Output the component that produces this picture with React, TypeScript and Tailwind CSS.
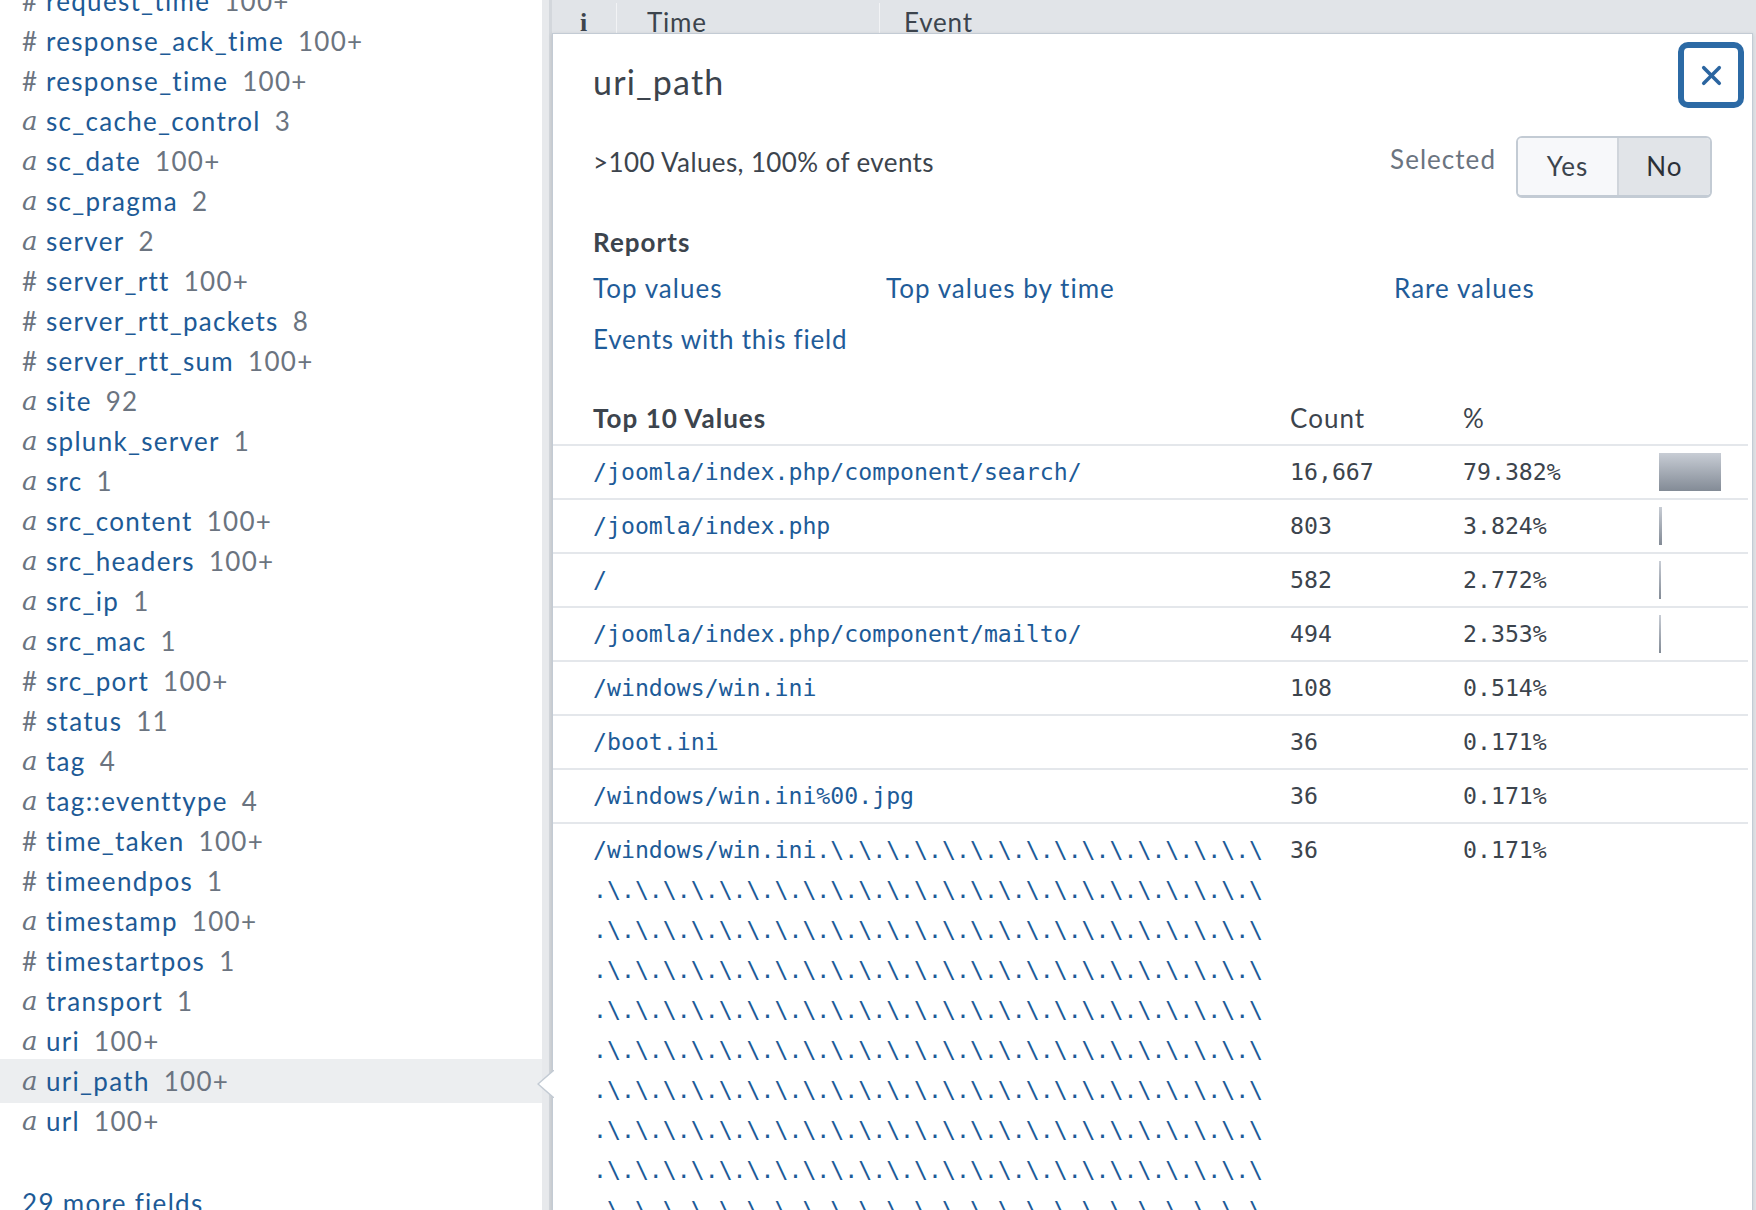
import { X } from "lucide-react";

type Field = { kind: "a" | "#"; name: string; count: string };

const fields: Field[] = [
  { kind: "#", name: "request_time", count: "100+" },
  { kind: "#", name: "response_ack_time", count: "100+" },
  { kind: "#", name: "response_time", count: "100+" },
  { kind: "a", name: "sc_cache_control", count: "3" },
  { kind: "a", name: "sc_date", count: "100+" },
  { kind: "a", name: "sc_pragma", count: "2" },
  { kind: "a", name: "server", count: "2" },
  { kind: "#", name: "server_rtt", count: "100+" },
  { kind: "#", name: "server_rtt_packets", count: "8" },
  { kind: "#", name: "server_rtt_sum", count: "100+" },
  { kind: "a", name: "site", count: "92" },
  { kind: "a", name: "splunk_server", count: "1" },
  { kind: "a", name: "src", count: "1" },
  { kind: "a", name: "src_content", count: "100+" },
  { kind: "a", name: "src_headers", count: "100+" },
  { kind: "a", name: "src_ip", count: "1" },
  { kind: "a", name: "src_mac", count: "1" },
  { kind: "#", name: "src_port", count: "100+" },
  { kind: "#", name: "status", count: "11" },
  { kind: "a", name: "tag", count: "4" },
  { kind: "a", name: "tag::eventtype", count: "4" },
  { kind: "#", name: "time_taken", count: "100+" },
  { kind: "#", name: "timeendpos", count: "1" },
  { kind: "a", name: "timestamp", count: "100+" },
  { kind: "#", name: "timestartpos", count: "1" },
  { kind: "a", name: "transport", count: "1" },
  { kind: "a", name: "uri", count: "100+" },
  { kind: "a", name: "uri_path", count: "100+" },
  { kind: "a", name: "url", count: "100+" },
];

const dots = ".\\".repeat(24);

const topValues = [
  { value: ["/joomla/index.php/component/search/"], count: "16,667", pct: 79.382 },
  { value: ["/joomla/index.php"], count: "803", pct: 3.824 },
  { value: ["/"], count: "582", pct: 2.772 },
  { value: ["/joomla/index.php/component/mailto/"], count: "494", pct: 2.353 },
  { value: ["/windows/win.ini"], count: "108", pct: 0.514 },
  { value: ["/boot.ini"], count: "36", pct: 0.171 },
  { value: ["/windows/win.ini%00.jpg"], count: "36", pct: 0.171 },
  {
    value: ["/windows/win.ini" + ".\\".repeat(16), ...Array(10).fill(dots)],
    count: "36",
    pct: 0.171,
  },
];

const sans = "[font-family:Lato,sans-serif]";

function FieldRow({ field, selected }: { field: Field; selected: boolean }) {
  return (
    <div
      className={
        selected
          ? "flex items-center h-[44px] -my-[2px] bg-[#eceef0] pl-[22px]"
          : "flex items-center h-[40px] pl-[22px]"
      }
    >
      {field.kind === "a" ? (
        <span className="w-[24px] text-[#6b7480] italic text-[26px] [font-family:'DejaVu_Serif',serif]">
          a
        </span>
      ) : (
        <span className="w-[24px] text-[#6b7480]">#</span>
      )}
      <span className="text-[#1d5a96]">{field.name}</span>
      <span className="ml-[14px] text-[#6b7480]">{field.count}</span>
    </div>
  );
}

function Sidebar() {
  return (
    <aside className="w-[542px] shrink-0 bg-white text-[26px] tracking-[0.05em]">
      <div className="-mt-[19px] flex flex-col">
        {fields.map((f) => (
          <FieldRow key={f.name} field={f} selected={f.name === "uri_path"} />
        ))}
      </div>
      <div className="pl-[22px] mt-[42px] h-[40px] flex items-center text-[#1d5a96]">
        29 more fields
      </div>
    </aside>
  );
}

function Popover() {
  return (
    <div className="relative w-[1201px] h-[1300px] bg-white border border-[#c3cbd4] shadow-[0_1px_4px_rgba(0,0,0,0.12)] text-[#3c444d]">
      {/* arrow pointing at the selected field */}
      <svg
        className="absolute -left-[16px] top-[1036px]"
        width="17"
        height="28"
        viewBox="0 0 17 28"
      >
        <polygon points="17,0 1,14 17,28" fill="#ffffff" />
        <polyline points="17,0 1,14 17,28" fill="none" stroke="#c3cbd4" strokeWidth="1.5" />
      </svg>

      <button className="absolute top-[8px] right-[8px] w-[66px] h-[66px] rounded-[10px] border-[6px] border-[#2c6aa5] bg-white flex items-center justify-center">
        <X size={31} strokeWidth={2.8} className="text-[#2b65a0]" />
      </button>

      <div className="pl-[40px] pr-[40px] pt-[26px]">
        <h2 className="text-[34px] leading-[44px] tracking-[0.035em] text-[#3c444d]">uri_path</h2>

        <div className="mt-[32px] flex items-center justify-between text-[26px]">
          <span className="mb-[10px] tracking-[0.015em]">&gt;100 Values, 100% of events</span>
          <div className="flex items-center tracking-[0.04em]">
            <span className="mb-[16px] mr-[20px] text-[#6b7480]">Selected</span>
            <div className="flex h-[62px] rounded-[6px] border-2 border-b-[3px] border-[#c3cbd4] overflow-hidden">
              <span className="w-[99px] flex items-center justify-center bg-[#f7f8fa] text-[#3c444d]">
                Yes
              </span>
              <span className="w-[93px] flex items-center justify-center bg-[#e1e4e8] border-l-2 border-[#d0d5db] text-[#2b3038]">
                No
              </span>
            </div>
          </div>
        </div>

        <div className="mt-[26px] text-[26px] tracking-[0.04em]">
          <h3 className="font-bold leading-[36px] text-[#3c444d]">Reports</h3>
          <div className="mt-[10px] grid grid-cols-[293px_508px_1fr] gap-y-[15px] leading-[36px] text-[#1f5c99]">
            <span>Top values</span>
            <span>Top values by time</span>
            <span>Rare values</span>
            <span className="tracking-[0.03em]">Events with this field</span>
          </div>
        </div>
      </div>

      <div className="mt-[35px] mr-[4px]">
        <div className="grid grid-cols-[737px_173px_196px_1fr] h-[54px] items-center border-b-2 border-[#e4e7eb] text-[26px] tracking-[0.04em]">
          <span className="pl-[40px] font-bold">Top 10 Values</span>
          <span>Count</span>
          <span>%</span>
          <span />
        </div>
        {topValues.map((row, i) => (
          <div
            key={i}
            className="grid grid-cols-[737px_173px_196px_1fr] items-start py-[6px] border-b-2 border-[#e4e7eb] text-[23.2px] leading-[40px] [font-family:'DejaVu_Sans_Mono',monospace]"
          >
            <div className="pl-[40px] text-[#1d5b98] whitespace-pre">
              {row.value.map((line, j) => (
                <div key={j}>{line}</div>
              ))}
            </div>
            <span className="text-[#3c444d]">{row.count}</span>
            <span className="text-[#3c444d]">{row.pct.toFixed(3)}%</span>
            <div className="h-[40px] flex items-center">
              <div
                className="h-[38px] bg-gradient-to-b from-[#c8cdd5] to-[#838b96]"
                style={{ width: `${(row.pct / 100) * 78}px` }}
              />
            </div>
          </div>
        ))}
      </div>
    </div>
  );
}

export default function App() {
  return (
    <div className={`w-[1756px] h-[1210px] overflow-hidden flex bg-white ${sans}`}>
      <Sidebar />
      <div className="w-[10px] shrink-0 bg-[#e7e9ec] border-r-[3px] border-[#d3d7dc]" />
      <main className="flex-1 flex flex-col bg-[#e1e4e8]">
        <div className="h-[33px] shrink-0 flex items-start pt-[3px] text-[26px] text-[#3c444d] tracking-[0.03em]">
          <span className="w-[64px] pl-[28px] font-bold [font-family:'Liberation_Serif',serif]">i</span>
          <span className="w-px h-[30px] bg-[#f2f3f5]" />
          <span className="w-[262px] pl-[30px]">Time</span>
          <span className="w-px h-[30px] bg-[#f2f3f5]" />
          <span className="pl-[24px]">Event</span>
        </div>
        <div className="flex">
          <Popover />
        </div>
      </main>
    </div>
  );
}
